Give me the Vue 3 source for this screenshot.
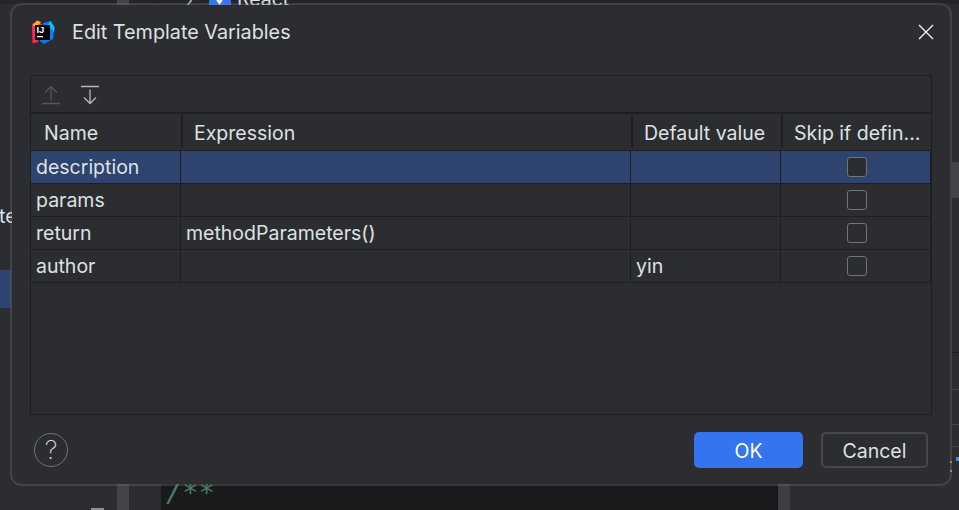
<script setup>
const rows = [
  { name: 'description', expression: '', value: '', selected: true },
  { name: 'params', expression: '', value: '' },
  { name: 'return', expression: 'methodParameters()', value: '' },
  { name: 'author', expression: '', value: 'yin' },
]
</script>

<template>
  <div class="screen">
    <!-- IDE behind the dialog -->
    <div class="backdrop">
      <div class="top-band"></div>
      <div class="scroll-strip"></div>
      <div class="gutter-line"></div>
      <div class="editor"><span class="comment">/**</span></div>
      <div class="editor-strip"></div>
      <div class="side-select"></div>
      <span class="side-text">te</span>
      <div class="side-mark"></div>
      <div class="tree-item">
        <span class="tree-arrow">›</span>
        <span class="tree-check">
          <svg width="22" height="22" viewBox="0 0 22 22"><path d="M6 8l4.500 7 6-10" fill="none" stroke="#fff" stroke-width="2.400" /></svg>
        </span>
        <span class="tree-label">React</span>
      </div>
      <div class="right-thumb"></div>
      <div class="right-line line-a"></div>
      <div class="right-line line-b"></div>
      <div class="right-line line-c"></div>
      <div class="right-line line-d"></div>
      <div class="right-dot"></div>
      <div class="right-tick tick-a"></div>
      <div class="right-tick tick-b"></div>
    </div>

    <div class="dialog">
      <header class="title-bar">
        <svg class="logo" width="26" height="26" viewBox="0 0 26 26">
          <path d="M13 4l8-2 3.500 6L23 20l-9 5-4-3z" fill="#087cfa" />
          <path d="M20 2l4.500 6L24 13l-6-7z" fill="#07c3f2" />
          <path d="M2 5l6-3.500L12 6 8 23l-5.500 1.500z" fill="#fe2857" />
          <path d="M3 6l4-4.500L11 3 6 9z" fill="#fdb60d" />
          <rect x="5" y="6" width="15" height="15" fill="#000" />
          <text x="6.400" y="14" class="logo-text">IJ</text>
          <rect x="7" y="17" width="6" height="1.300" fill="#fff" />
        </svg>
        <span class="title">Edit Template Variables</span>
        <svg class="close" width="16" height="16" viewBox="0 0 16 16">
          <path d="M1 1l14 14M15 1L1 15" stroke="#f0f1f3" stroke-width="1.400" />
        </svg>
      </header>

      <section class="panel">
        <div class="toolbar">
          <svg class="tool" width="20" height="20" viewBox="0 0 20 20">
            <path d="M1 18.500h18M10 15.500V1.500M4 7.500l6-6 6 6" fill="none" stroke="#55575c" stroke-width="1.300" />
          </svg>
          <svg class="tool" width="20" height="20" viewBox="0 0 20 20">
            <path d="M1 1.500h18M10 4.500v14M4 12.500l6 6 6-6" fill="none" stroke="#b4b8bf" stroke-width="1.300" />
          </svg>
        </div>
        <div class="head">
          <span class="head-cell">Name</span>
          <span class="head-cell">Expression</span>
          <span class="head-cell">Default value</span>
          <span class="head-cell">Skip if defin...</span>
        </div>
        <div v-for="row in rows" :key="row.name" class="row" :class="{ selected: row.selected }">
          <span class="cell">{{ row.name }}</span>
          <span class="cell">{{ row.expression }}</span>
          <span class="cell">{{ row.value }}</span>
          <span class="cell check-cell"><i class="checkbox"></i></span>
        </div>
      </section>

      <footer class="footer">
        <span class="help">?</span>
        <button class="btn primary">OK</button>
        <button class="btn">Cancel</button>
      </footer>
    </div>
  </div>
</template>

<style>
html,
body {
  margin: 0;
  background: #1e1f22;
}
</style>

<style scoped>
.screen {
  position: relative;
  width: 959px;
  height: 510px;
  overflow: hidden;
  padding: 3px 7px 0 10px;
  box-sizing: border-box;
  background: #2b2d30;
  font-family: Inter, "Noto Sans", sans-serif;
}

.backdrop {
  position: absolute;
  inset: 0;
}

.top-band {
  position: absolute;
  left: 0;
  right: 0;
  top: 0;
  height: 4px;
  background: #242528;
}

.scroll-strip {
  position: absolute;
  left: 117px;
  top: 0;
  width: 12px;
  height: 510px;
  background: #434447;
}

.gutter-line {
  position: absolute;
  left: 156px;
  top: 0;
  width: 1px;
  height: 4px;
  background: #1e1f22;
}

.editor {
  position: absolute;
  left: 161px;
  top: 480px;
  width: 617px;
  height: 30px;
  background: #191a1c;
}

.editor-strip {
  position: absolute;
  left: 778px;
  top: 480px;
  width: 12px;
  height: 30px;
  background: #3d3e41;
}

.comment {
  position: absolute;
  left: 5px;
  top: -3px;
  font: italic 27px "DejaVu Sans Mono", monospace;
  color: #4f7a62;
}

.side-select {
  position: absolute;
  left: 0;
  top: 270px;
  width: 11px;
  height: 38px;
  background: #2e436e;
}

.side-text {
  position: absolute;
  left: -1px;
  top: 204px;
  font-size: 19.500px;
  color: #dfe1e5;
}

.side-mark {
  position: absolute;
  left: 91px;
  top: 508px;
  width: 13px;
  height: 2px;
  background: #8c8f94;
}

.tree-item {
  position: absolute;
  left: 186px;
  top: -13px;
  display: flex;
  align-items: center;
  gap: 16px;
  height: 24px;
}

.tree-arrow {
  color: #b4b8bf;
  font-size: 18px;
}

.tree-check {
  width: 22px;
  height: 22px;
  border-radius: 3px;
  background: #3574f0;
}

.tree-label {
  margin-left: -10px;
  font-size: 19.500px;
  color: #dfe1e5;
}

.right-thumb {
  position: absolute;
  left: 952px;
  top: 162px;
  width: 7px;
  height: 36px;
  background: #434447;
}

.right-line {
  position: absolute;
  left: 952px;
  width: 7px;
  height: 1px;
  background: #43454a;
}

.line-a {
  top: 352px;
  background: #1e1f22;
}

.line-b {
  top: 389px;
}

.line-c {
  top: 424px;
}

.line-d {
  top: 446px;
}

.right-dot {
  position: absolute;
  left: 956px;
  top: 457px;
  width: 3px;
  height: 4px;
  background: #3d8fe0;
}

.right-tick {
  position: absolute;
  left: 950px;
  width: 2px;
  height: 2px;
  background: #a88f70;
}

.tick-a {
  top: 461px;
}

.tick-b {
  top: 470px;
}

.dialog {
  position: relative;
  display: flex;
  flex-direction: column;
  width: 942px;
  height: 483px;
  padding: 0 18px;
  box-sizing: border-box;
  border: 2px solid rgba(120, 122, 128, 0.3);
  border-radius: 12px;
  background: #2b2d30;
  background-clip: padding-box;
  color: #dfe1e5;
  font-size: 19.500px;
}

.title-bar {
  display: flex;
  align-items: center;
  flex: 0 0 70px;
  padding-bottom: 16px;
  box-sizing: border-box;
}

.logo {
  flex: none;
}

.logo-text {
  font: 700 9.500px "Liberation Sans", sans-serif;
  fill: #fff;
}

.title {
  margin-left: 16px;
  font-size: 19.800px;
}

.close {
  margin-left: auto;
  margin-right: -2px;
}

.panel {
  display: flex;
  flex-direction: column;
  height: 340px;
  box-sizing: border-box;
  border: 1px solid #1e1f22;
}

.toolbar {
  display: flex;
  align-items: center;
  gap: 19px;
  flex: 0 0 38px;
  padding: 2px 0 0 10px;
  box-sizing: border-box;
  border-bottom: 2px solid #1e1f22;
}

.tool {
  flex: none;
}

.head {
  display: grid;
  grid-template-columns: 152px 450px 150px 1fr;
  align-items: start;
  height: 37px;
  padding-top: 1px;
  box-sizing: border-box;
  border-bottom: 1px solid #1e1f22;
}

.head-cell {
  height: 33px;
  line-height: 37px;
  padding-left: 11px;
  box-sizing: border-box;
  border-right: 2px solid #1e1f22;
  white-space: nowrap;
  overflow: hidden;
}

.head-cell:first-child {
  padding-left: 13px;
}

.head-cell:last-child {
  border-right: 0;
}

.row {
  display: grid;
  grid-template-columns: 150px 450px 150px 1fr;
  height: 33px;
  margin-right: 1px;
  box-sizing: border-box;
  border-bottom: 1px solid #1e1f22;
  box-shadow: 1px 0 #1e1f22;
}

.row.selected {
  background: #2e436e;
}

.cell {
  display: flex;
  align-items: center;
  padding-left: 5px;
  box-sizing: border-box;
  border-right: 1px solid #1e1f22;
}

.cell:last-child {
  border-right: 0;
}

.check-cell {
  justify-content: center;
  padding-left: 2px;
}

.checkbox {
  display: block;
  width: 20px;
  height: 20px;
  box-sizing: border-box;
  border: 1px solid #6f737a;
  border-radius: 3px;
  background: #2b2d30;
}

.footer {
  display: flex;
  align-items: center;
  flex: 1;
  padding: 1px 4px 0;
}

.help {
  width: 34px;
  height: 34px;
  box-sizing: border-box;
  border: 1px solid #6f737a;
  border-radius: 50%;
  text-align: center;
  line-height: 32px;
  font-size: 26px;
  font-weight: 200;
  color: #cfd1d5;
}

.btn {
  width: 107px;
  height: 36px;
  padding: 2px 0 0;
  box-sizing: border-box;
  border: 2px solid #46484d;
  border-radius: 5px;
  background: #2b2d30;
  color: #dfe1e5;
  font: 19.500px Inter, "Noto Sans", sans-serif;
}

.btn.primary {
  width: 109px;
  margin-left: auto;
  margin-right: 18px;
  border-color: #3574f0;
  background: #3574f0;
  color: #fff;
}
</style>
